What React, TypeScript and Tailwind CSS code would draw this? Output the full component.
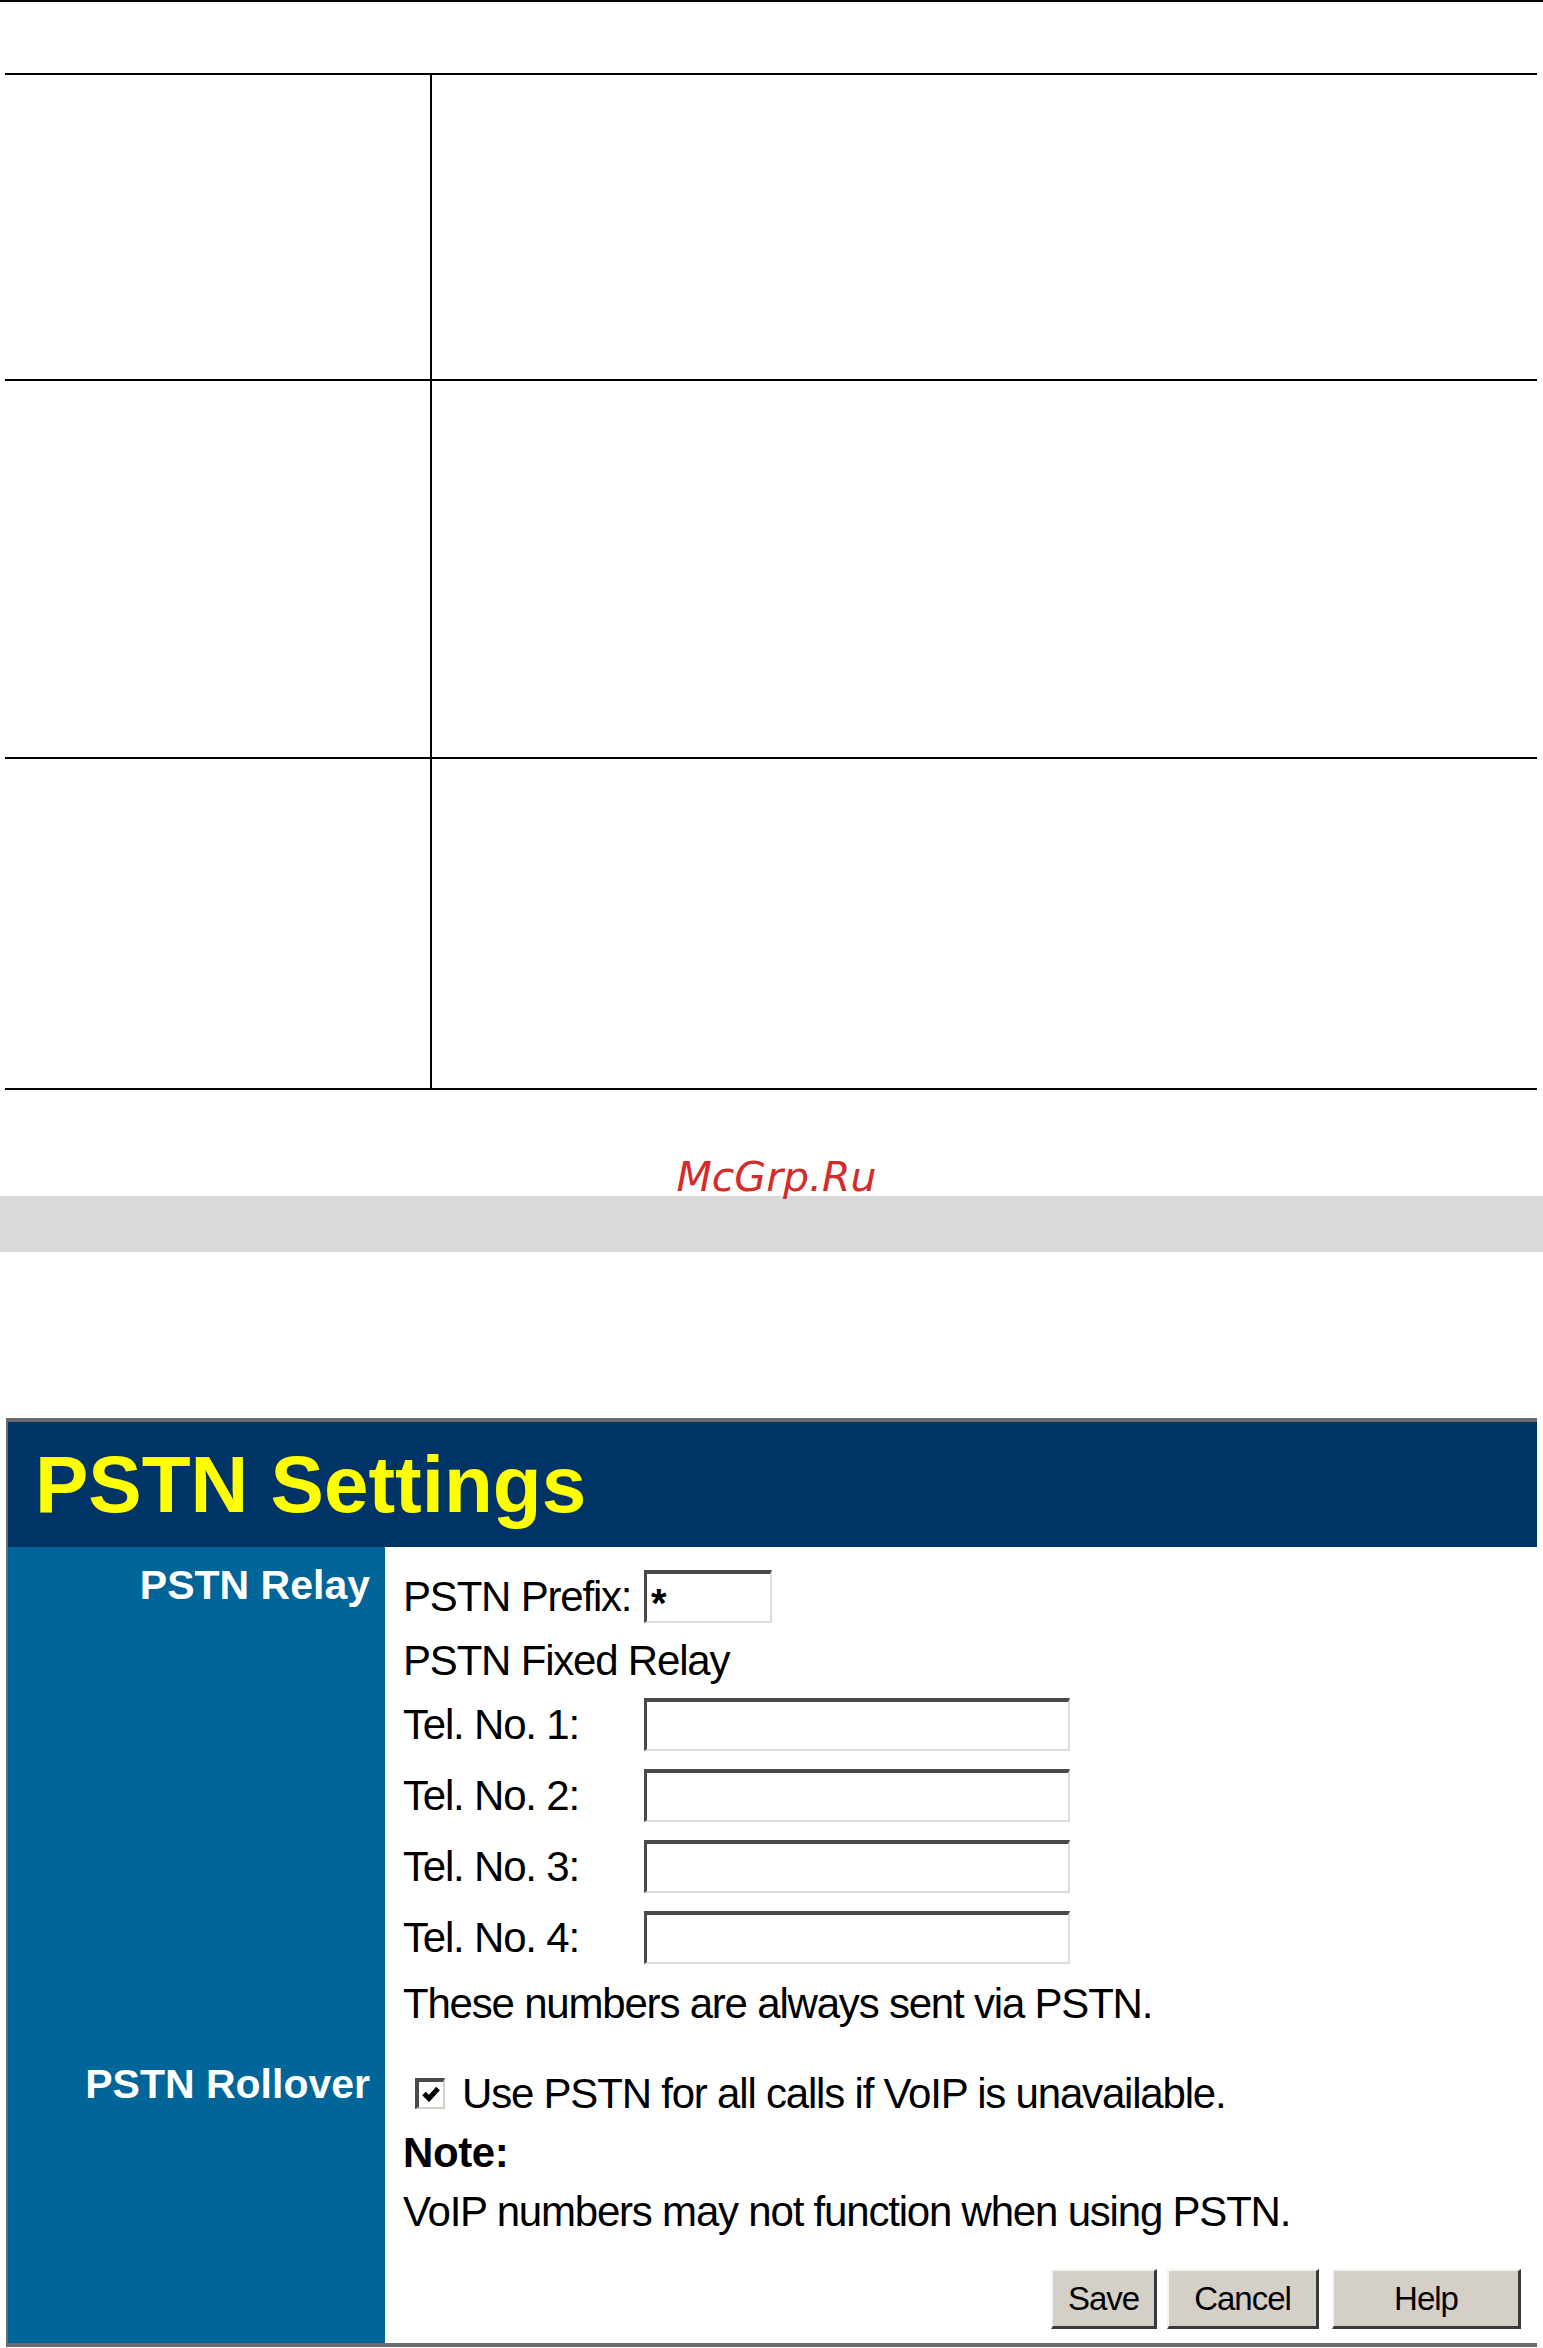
import React from 'react';

const telNumbers = ['Tel. No. 1:', 'Tel. No. 2:', 'Tel. No. 3:', 'Tel. No. 4:'];

function TextBox({ width, value }: { width: string; value?: string }) {
  return (
    <div
      className={`${width} h-[53px] bg-white border-t-[4px] border-l-[3px] border-b-2 border-r-2 border-t-[#4a4a4a] border-l-[#4a4a4a] border-b-[#dedcd6] border-r-[#dedcd6] flex items-center pl-[4px]`}
    >
      {value ? <span className="text-[40px] font-bold leading-none pt-[10px]">{value}</span> : null}
    </div>
  );
}

function WinButton({ label, width }: { label: string; width: string }) {
  return (
    <button
      type="button"
      className={`${width} h-[60px] bg-[#d4d0c8] border-t-2 border-l-2 border-t-[#f4f3ef] border-l-[#f4f3ef] border-b-[3px] border-r-[3px] border-b-[#3a3a3a] border-r-[#3a3a3a] text-[33px] tracking-[-1px] text-black leading-none flex items-center justify-center`}
    >
      {label}
    </button>
  );
}

export default function App() {
  return (
    <div className="w-[1543px] bg-white font-['Liberation_Sans',Arial,sans-serif] text-black">
      {/* top rule */}
      <div className="h-[2px] bg-black" />
      <div className="h-[71px]" />

      {/* empty manual table */}
      <div className="ml-[5px] mr-[6px] border-t-2 border-black">
        <div className="grid grid-cols-[427px_1fr] h-[306px] border-b-2 border-black">
          <div className="border-r-2 border-black" />
          <div />
        </div>
        <div className="grid grid-cols-[427px_1fr] h-[378px] border-b-2 border-black">
          <div className="border-r-2 border-black" />
          <div />
        </div>
        <div className="grid grid-cols-[427px_1fr] h-[331px] border-b-2 border-black">
          <div className="border-r-2 border-black" />
          <div />
        </div>
      </div>

      {/* watermark + page band */}
      <div className="h-[106px] flex items-end justify-center pl-[10px]">
        <span className="font-['DejaVu_Sans',sans-serif] italic text-[41px] leading-[41px] mb-[-2px] text-[#d42b2b]">
          McGrp.Ru
        </span>
      </div>
      <div className="h-[56px] bg-[#d9d9d9]" />
      <div className="h-[166px]" />

      {/* PSTN Settings panel */}
      <div className="mx-[6px] border-t-4 border-l-2 border-b-4 border-[#6b6b6b]">
        <div className="h-[125px] bg-[#003366] flex items-center pl-[27px]">
          <h1 className="text-[80px] font-bold leading-none text-[#ffff00]">PSTN Settings</h1>
        </div>

        <div className="grid grid-cols-[377px_1fr]">
          {/* PSTN Relay */}
          <div className="bg-[#006699] pt-[18px] pr-[15px] text-right">
            <span className="text-[41px] font-bold leading-[40px] text-white">PSTN Relay</span>
          </div>
          <div className="pl-[18px] pt-[23px] text-[42px] tracking-[-1.2px]">
            <div className="h-[53px] flex items-center">
              <span className="w-[241px]">PSTN Prefix:</span>
              <TextBox width="w-[128px]" value="*" />
            </div>
            <div className="h-[75px] flex items-center">PSTN Fixed Relay</div>
            <div className="flex flex-col gap-[18px]">
              {telNumbers.map((t) => (
                <div key={t} className="h-[53px] flex items-center">
                  <span className="w-[241px]">{t}</span>
                  <TextBox width="w-[426px]" />
                </div>
              ))}
            </div>
            <div className="h-[78px] flex items-center">These numbers are always sent via PSTN.</div>
          </div>

          {/* PSTN Rollover */}
          <div className="bg-[#006699] pt-[22px] pr-[15px] text-right">
            <span className="text-[41px] font-bold leading-[40px] text-white">PSTN Rollover</span>
          </div>
          <div className="pl-[18px] pb-[14px] text-[42px] tracking-[-1.2px]">
            <div className="mt-[34px] h-[34px] flex items-center pl-[12px]">
              <div className="w-[30px] h-[31px] bg-white border-t-[4px] border-l-[4px] border-b-2 border-r-2 border-t-[#4a4a4a] border-l-[#4a4a4a] border-b-[#d4d0c8] border-r-[#d4d0c8] flex items-center justify-center">
                <svg width="18" height="16" viewBox="0 0 18 16">
                  <path d="M2 7.5 L7 12.5 L16 2.5" fill="none" stroke="#000" strokeWidth="5" />
                </svg>
              </div>
              <span className="ml-[17px]">Use PSTN for all calls if VoIP is unavailable.</span>
            </div>
            <div className="h-[84px] flex items-center font-bold tracking-[-0.4px]">Note:</div>
            <div className="h-[34px] flex items-center">VoIP numbers may not function when using PSTN.</div>
            <div className="mt-[41px] flex justify-end pr-[16px]">
              <WinButton label="Save" width="w-[106px]" />
              <div className="w-[10px]" />
              <WinButton label="Cancel" width="w-[152px]" />
              <div className="w-[13px]" />
              <WinButton label="Help" width="w-[189px]" />
            </div>
          </div>
        </div>
      </div>
    </div>
  );
}
